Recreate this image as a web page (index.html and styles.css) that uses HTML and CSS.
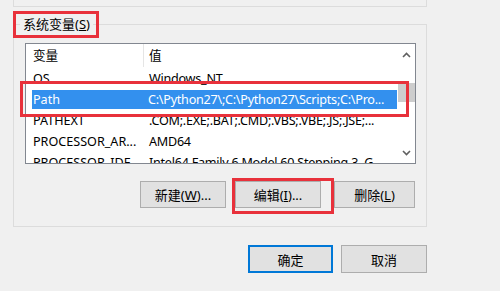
FILE: index.html
```html
<!DOCTYPE html>
<html lang="zh-CN">
<head>
    <meta charset="UTF-8">
    <meta name="viewport" content="width=device-width, initial-scale=1.0">
    <title>环境变量</title>
    <link rel="stylesheet" href="styles.css">
</head>
<body>
    <div class="dialog">
        <div class="group-top"></div>

        <div class="group">
            <div class="group-title">系统变量(<u>S</u>)</div>

            <div class="listview">
                <div class="list-body">
                    <div class="list-header">
                        <div class="col-name">变量</div>
                        <div class="col-value">值</div>
                    </div>
                    <div class="row">
                        <div class="col-name">OS</div>
                        <div class="col-value">Windows_NT</div>
                    </div>
                    <div class="row selected">
                        <div class="col-name">Path</div>
                        <div class="col-value">C:\Python27\;C:\Python27\Scripts;C:\Pro...</div>
                    </div>
                    <div class="row">
                        <div class="col-name">PATHEXT</div>
                        <div class="col-value">.COM;.EXE;.BAT;.CMD;.VBS;.VBE;.JS;.JSE;...</div>
                    </div>
                    <div class="row">
                        <div class="col-name">PROCESSOR_AR...</div>
                        <div class="col-value">AMD64</div>
                    </div>
                    <div class="row">
                        <div class="col-name">PROCESSOR_IDE...</div>
                        <div class="col-value">Intel64 Family 6 Model 60 Stepping 3, G...</div>
                    </div>
                </div>
                <div class="scrollbar">
                    <div class="arrow">
                        <svg width="9" height="6" viewBox="0 0 9 6"><path d="M1 5 L4.5 1.5 L8 5" fill="none" stroke="#606060" stroke-width="1.6"/></svg>
                    </div>
                    <div class="track"><div class="thumb"></div></div>
                    <div class="arrow">
                        <svg width="9" height="6" viewBox="0 0 9 6"><path d="M1 1 L4.5 4.5 L8 1" fill="none" stroke="#606060" stroke-width="1.6"/></svg>
                    </div>
                </div>
            </div>

            <div class="group-buttons">
                <button class="btn btn-new">新建(<u>W</u>)...</button>
                <button class="btn btn-edit">编辑(<u>I</u>)...</button>
                <button class="btn btn-del">删除(<u>L</u>)</button>
            </div>
        </div>

        <div class="dialog-buttons">
            <button class="btn btn-ok">确定</button>
            <button class="btn btn-cancel">取消</button>
        </div>

        <!-- red marks drawn over the screenshot -->
        <div class="mark mark-title"></div>
        <div class="mark mark-path"></div>
        <div class="mark mark-edit"></div>
    </div>
</body>
</html>
```

FILE: styles.css
```css
body {
    margin: 0;
    background-color: #f0f0f0;
    font-family: "Noto Sans", "Noto Sans CJK SC", sans-serif;
    font-size: 13px;
    color: #000;
    overflow: hidden;
}
.dialog {
    position: relative;
    width: 500px;
    height: 291px;
}
.group-top {
    margin-left: 13px;
    width: 412px;
    height: 6px;
    border: 1px solid #dcdcdc;
    border-top: none;
}
.group {
    margin: 17px 0 0 13px;
    width: 412px;
    height: 201px;
    border: 1px solid #dcdcdc;
}
.group-title {
    display: inline-block;
    margin: -10px 0 0 6px;
    padding: 0 3px;
    height: 19px;
    line-height: 19px;
    background-color: #f0f0f0;
    vertical-align: top;
}
.listview {
    display: flex;
    margin-left: 11px;
    width: 389px;
    height: 119px;
    border: 1px solid #828790;
    background-color: #fff;
    overflow: hidden;
}
.list-body {
    flex: 1;
    overflow: hidden;
    font-size: 12.6px;
}
.list-header, .row {
    display: flex;
    white-space: nowrap;
}
.list-header {
    height: 23px;
    line-height: 23px;
    margin-bottom: 1px;
}
.list-header .col-name {
    border-right: 1px solid #e5e5e5;
}
.row {
    height: 21px;
    line-height: 21px;
}
.col-name {
    width: 110px;
    padding-left: 7px;
    flex-shrink: 0;
}
.col-value {
    padding-left: 5px;
}
.row .col-value {
    padding-left: 6px;
    letter-spacing: -0.25px;
}
.row.selected {
    margin: 1px 1px 1px 6px;
    height: 19px;
    line-height: 19px;
    background-color: #3390ee;
    color: #fff;
}
.row.selected .col-name {
    width: 109px;
    padding-left: 1px;
}
.scrollbar {
    width: 17px;
    display: flex;
    flex-direction: column;
    background-color: #fff;
}
.arrow {
    height: 21px;
    display: flex;
    align-items: center;
    justify-content: center;
}
.track {
    flex: 1;
    padding-top: 18px;
}
.thumb {
    height: 19px;
    background-color: #cdcdcd;
}
.group-buttons {
    display: flex;
    justify-content: flex-end;
    margin: 17px 11px 0 0;
}
.btn {
    height: 27px;
    padding: 0;
    background-color: #e1e1e1;
    border: 1px solid #adadad;
    font-family: "Noto Sans", "Noto Sans CJK SC", sans-serif;
    font-size: 13px;
    color: #000;
}
.btn-new {
    width: 86px;
}
.btn-edit {
    width: 86px;
    margin-left: 9px;
}
.btn-del {
    width: 81px;
    margin-left: 13px;
}
.dialog-buttons {
    display: flex;
    justify-content: flex-end;
    margin: 18px 73px 0 0;
}
.btn-ok {
    width: 85px;
    height: 28px;
    border: 2px solid #0078d7;
}
.btn-cancel {
    width: 86px;
    height: 28px;
    margin-left: 8px;
}
.mark {
    position: absolute;
    border: 3px solid #e8313b;
    box-sizing: border-box;
}
.mark-title {
    left: 13px;
    top: 11px;
    width: 86px;
    height: 27px;
}
.mark-path {
    left: 20px;
    top: 81px;
    width: 389px;
    height: 36px;
}
.mark-edit {
    left: 232px;
    top: 178px;
    width: 102px;
    height: 36px;
}
```
